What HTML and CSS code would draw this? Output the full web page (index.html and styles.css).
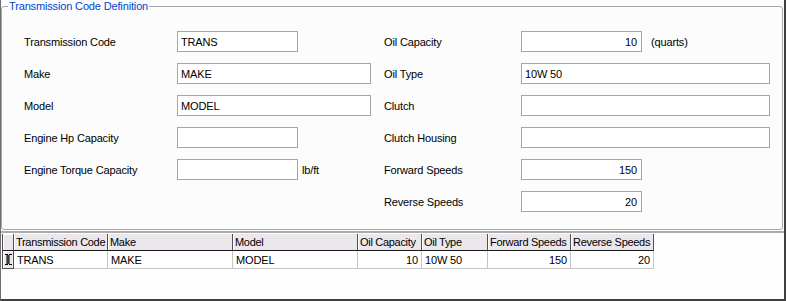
FILE: index.html
```html
<!DOCTYPE html>
<html lang="en">
<head>
    <meta charset="UTF-8">
    <title>Transmission Code Definition</title>
    <link rel="stylesheet" href="styles.css">
</head>
<body>
    <div class="window">
        <div class="top-panel">
            <fieldset class="group">
                <legend>Transmission Code Definition</legend>
                <div class="form">
                    <label class="lbl">Transmission Code</label>
                    <div class="field"><input class="input" value="TRANS"></div>
                    <label class="lbl">Oil Capacity</label>
                    <div class="field"><input class="input num" value="10"><span class="unit-q">(quarts)</span></div>

                    <label class="lbl">Make</label>
                    <div class="field"><input class="input wide" value="MAKE"></div>
                    <label class="lbl">Oil Type</label>
                    <div class="field"><input class="input wider" value="10W 50"></div>

                    <label class="lbl">Model</label>
                    <div class="field"><input class="input wide" value="MODEL"></div>
                    <label class="lbl">Clutch</label>
                    <div class="field"><input class="input wider" value=""></div>

                    <label class="lbl">Engine Hp Capacity</label>
                    <div class="field"><input class="input" value=""></div>
                    <label class="lbl">Clutch Housing</label>
                    <div class="field"><input class="input wider" value=""></div>

                    <label class="lbl">Engine Torque Capacity</label>
                    <div class="field"><input class="input" value=""><span class="unit">lb/ft</span></div>
                    <label class="lbl">Forward Speeds</label>
                    <div class="field"><input class="input num" value="150"></div>

                    <label class="lbl right-only">Reverse Speeds</label>
                    <div class="field"><input class="input num" value="20"></div>
                </div>
            </fieldset>
        </div>

        <div class="grid-area">
            <table class="grid">
                <colgroup>
                    <col style="width: 12px">
                    <col style="width: 94px">
                    <col style="width: 125px">
                    <col style="width: 125px">
                    <col style="width: 64px">
                    <col style="width: 66px">
                    <col style="width: 83px">
                    <col style="width: 83px">
                </colgroup>
                <thead>
                    <tr>
                        <th class="row-head"></th>
                        <th>Transmission Code</th>
                        <th>Make</th>
                        <th>Model</th>
                        <th>Oil Capacity</th>
                        <th>Oil Type</th>
                        <th>Forward Speeds</th>
                        <th>Reverse Speeds</th>
                    </tr>
                </thead>
                <tbody>
                    <tr>
                        <td class="row-head">
                            <svg width="7" height="11" viewBox="0 0 7 11">
                                <path d="M0 0.5h3M4 0.5h3M0 10.5h3M4 10.5h3" stroke="#000" stroke-width="1"/>
                                <path d="M2 0v11M3 1v9M4 1v9" stroke="#000" stroke-width="1" fill="none"/>
                            </svg>
                        </td>
                        <td>TRANS</td>
                        <td>MAKE</td>
                        <td>MODEL</td>
                        <td class="num">10</td>
                        <td>10W 50</td>
                        <td class="num">150</td>
                        <td class="num">20</td>
                    </tr>
                </tbody>
            </table>
        </div>
    </div>
</body>
</html>
```

FILE: styles.css
```css
body {
    margin: 0;
    font-family: "Liberation Sans", Arial, sans-serif;
    font-size: 11px;
    letter-spacing: -0.15px;
    color: #000;
    background: #fff;
}

.window {
    width: 786px;
    height: 301px;
    box-sizing: border-box;
    border-left: 1px solid #6e6e6e;
    border-right: 2px solid #404040;
    border-bottom: 2px solid #404040;
    background: #fbfcfb;
    display: flex;
    flex-direction: column;
}

.top-panel {
    height: 231px;
    flex: none;
}

.group {
    margin: 0 1px 0 0;
    padding: 0;
    height: 230px;
    box-sizing: border-box;
    border: 1px solid #a8a8a8;
    border-radius: 3px;
    min-width: 0;
}

.group legend {
    margin-left: 6px;
    padding: 0 1px;
    color: #0046d5;
    line-height: 13px;
}

.form {
    display: grid;
    grid-template-columns: 153px 207px 137px 1fr;
    grid-auto-rows: 21px;
    row-gap: 11px;
    padding: 18px 0 0 22px;
    align-items: center;
}

.right-only {
    grid-column: 3;
}

.field {
    display: flex;
    align-items: center;
}

.input {
    box-sizing: border-box;
    width: 121px;
    height: 21px;
    margin: 0;
    padding: 0 3px;
    border: 1px solid #a5a5a5;
    background: #fff;
    font: inherit;
    letter-spacing: inherit;
    color: #000;
    outline: none;
}

.input.wide {
    width: 194px;
}

.input.wider {
    width: 249px;
}

.input.num {
    text-align: right;
    padding-right: 4px;
}

.unit {
    margin-left: 4px;
}

.unit-q {
    margin-left: 9px;
}

.grid-area {
    flex: 1;
    border-top: 2px solid #ababab;
    padding: 1px 0 0 1px;
    background: #fcfdfc;
}

.grid {
    border-collapse: separate;
    border-spacing: 0;
    table-layout: fixed;
    width: 652px;
}

.grid th {
    height: 16px;
    padding: 0 1px 0 2px;
    background: #ebe7ec;
    border-right: 1px solid #505050;
    border-bottom: 1px solid #1a1a1a;
    box-shadow: inset 1px 0 0 #fff;
    text-align: left;
    font-weight: normal;
    letter-spacing: -0.3px;
    white-space: nowrap;
    overflow: hidden;
}

.grid td {
    height: 17px;
    padding: 0 3px;
    background: #fff;
    border-right: 1px solid #c4c4c4;
    border-bottom: 1px solid #c4c4c4;
    white-space: nowrap;
    overflow: hidden;
}

.grid td.num {
    text-align: right;
}

.grid .row-head {
    padding: 0;
    background: #ebe7ec;
    border-left: 1px solid #505050;
    border-right: 1px solid #505050;
    box-shadow: inset 1px 1px 0 #fff;
}

.grid td.row-head {
    border-bottom: 1px solid #505050;
    text-align: center;
    vertical-align: middle;
}

.grid td.row-head svg {
    display: block;
    margin: 0 auto;
}
```
